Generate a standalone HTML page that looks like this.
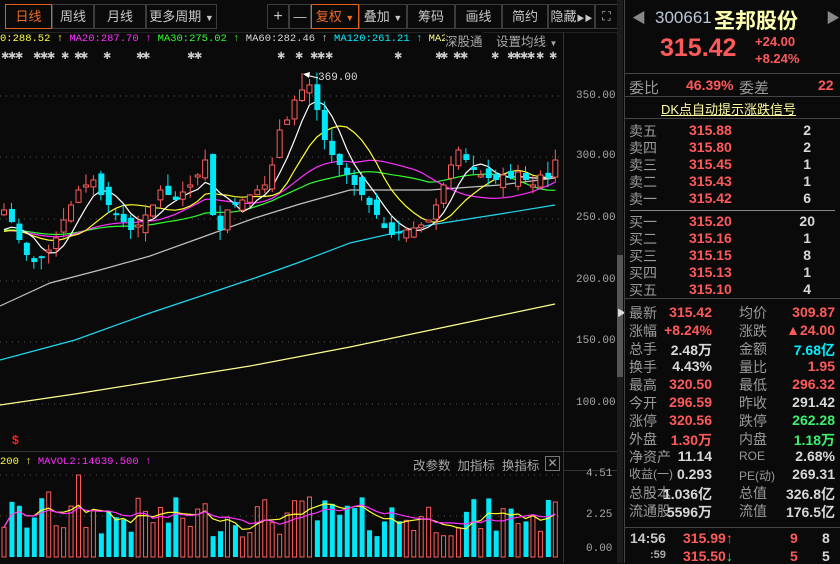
<!DOCTYPE html>
<html><head><meta charset="utf-8"><style>
*{margin:0;padding:0;box-sizing:border-box}
body{width:840px;height:563px;background:#0a0a0a;overflow:hidden;position:relative;font-family:"Liberation Sans","Noto Sans CJK SC",sans-serif;color:#b0b0b0}
.a{position:absolute;white-space:nowrap}
.btn{position:absolute;top:4px;height:25px;border:1px solid #3c3c3c;color:#c8c8c8;font-size:13px;line-height:23px;text-align:center}
.or{border-color:#e0601c;color:#f06a22}
.mono{font-family:"Liberation Mono","Noto Sans CJK SC",monospace}
.r{color:#ff5a5a}.c{color:#00f0ff}.g{color:#3cf06e}.w{color:#d8d8d8}.gy{color:#a8a8a8}
.rp{font-size:14px;font-weight:bold}
.lab{font-size:14px;color:#9a9a9a;font-weight:normal}
.hl{position:absolute;left:625px;width:215px;height:1px;background:#444}
.st{position:absolute;top:52px;font-size:10px;color:#c8c8c8;line-height:10px}
</style></head><body>
<div class="btn or" style="left:5px;width:47px">日线</div>
<div class="btn" style="left:52px;width:42px">周线</div>
<div class="btn" style="left:94px;width:52px">月线</div>
<div class="btn" style="left:146px;width:71px">更多周期 <span style="font-size:9px">▼</span></div>
<div class="btn" style="left:267px;width:22px;font-size:16px">+</div>
<div class="btn" style="left:289px;width:22px">—</div>
<div class="btn or" style="left:311px;width:48px">复权 <span style="font-size:9px">▼</span></div>
<div class="btn" style="left:359px;width:48px">叠加 <span style="font-size:9px">▼</span></div>
<div class="btn" style="left:407px;width:48px">筹码</div>
<div class="btn" style="left:455px;width:47px">画线</div>
<div class="btn" style="left:502px;width:46px">简约</div>
<div class="btn" style="left:548px;width:47px">隐藏<span style="font-size:8px">▶▶</span></div>
<div class="btn" style="left:595px;width:23px;font-size:12px">⛶</div>
<div class="a" style="left:0;top:32px;width:618px;height:1px;background:#222"></div>
<div class="a mono" style="left:0;top:32px;font-size:10.5px;line-height:14px">
<span style="color:#ffff40">0:288.52 ↑</span> <span style="color:#ff30ff">MA20:287.70 ↑</span> <span style="color:#30ff30">MA30:275.02 ↑</span> <span class="w">MA60:282.46 ↑</span> <span class="c">MA120:261.21 ↑</span> <span style="color:#ffff80">MA25</span></div>
<div class="a gy" style="left:445px;top:31px;font-size:12.5px;background:#0a0a0a">深股通</div>
<div class="a gy" style="left:496px;top:31px;font-size:12.5px">设置均线 <span style="font-size:8px">▼</span></div>
<div id="stars"></div>

<svg id="ch" class="a" style="left:0;top:0" width="618" height="563"></svg>

<div class="a mono gy" style="left:576px;top:89px;font-size:11px;line-height:14px">350.00</div>
<div class="a mono gy" style="left:576px;top:150px;font-size:11px">300.00</div>
<div class="a mono gy" style="left:576px;top:212px;font-size:11px">250.00</div>
<div class="a mono gy" style="left:576px;top:274px;font-size:11px">200.00</div>
<div class="a mono gy" style="left:576px;top:335px;font-size:11px">150.00</div>
<div class="a mono gy" style="left:576px;top:397px;font-size:11px">100.00</div>
<div class="a mono w" style="left:318px;top:72px;font-size:11px">369.00</div>
<div class="a" style="left:12px;top:433px;font-size:12px;color:#ff2020;font-weight:bold">$</div>
<div class="a mono" style="left:0;top:456px;font-size:10.5px"><span style="color:#ffff40">200 ↑</span> <span style="color:#ff30ff">MAVOL2:14639.500 ↑</span></div>
<div class="a gy" style="left:413px;top:455px;font-size:12.5px">改参数 &nbsp;加指标 &nbsp;换指标</div>
<div class="a gy" style="left:545px;top:456px;width:15px;height:15px;border:1px solid #777;font-size:12px;line-height:13px;text-align:center">✕</div>
<div class="a mono gy" style="left:586px;top:468px;font-size:11px">4.51</div>
<div class="a mono gy" style="left:586px;top:509px;font-size:11px">2.25</div>
<div class="a mono gy" style="left:586px;top:543px;font-size:11px">0.00</div>

<div class="a" style="left:617px;top:0;width:6px;height:563px;background:#1c1c1c"></div>
<div class="a" style="left:617px;top:255px;width:6px;height:122px;background:#555"></div>
<div class="a" style="left:617px;top:306px;font-size:9px;color:#ddd">▶</div>
<div class="a" style="left:624px;top:0;width:1px;height:563px;background:#444"></div>

<div class="a" style="left:632px;top:8px;font-size:14px;color:#888">◀</div>
<div class="a" style="left:826px;top:8px;font-size:14px;color:#888">▶</div>
<div class="a" style="left:655px;top:8px;font-size:17px;color:#b8c8d8">300661</div>
<div class="a" style="left:714px;top:5px;font-size:21px;color:#ffffb0;font-weight:bold">圣邦股份</div>
<div class="a r" style="left:660px;top:34px;font-size:25px;font-weight:bold">315.42</div>
<div class="a r" style="left:755px;top:34px;font-size:13px;font-weight:bold">+24.00</div>
<div class="a r" style="left:755px;top:51px;font-size:13px;font-weight:bold">+8.24%</div>
<div class="hl" style="top:73px"></div>
<div class="a lab" style="left:629px;top:77px;font-size:15px">委比</div>
<div class="a r rp" style="left:686px;top:77px">46.39%</div>
<div class="a lab" style="left:739px;top:77px;font-size:15px">委差</div>
<div class="a r rp" style="left:818px;top:77px">22</div>
<div class="hl" style="top:96px"></div>
<div class="a" style="left:661px;top:99px;font-size:13px;color:#ffffa0;text-decoration:underline">DK点自动提示涨跌信号</div>
<div class="hl" style="top:118px"></div>
<div id="ob"></div>
<div class="a" style="left:630px;top:210px;width:205px;height:1px;background:#888"></div>
<div class="hl" style="top:298px"></div>
<div id="st"></div>
<div class="hl" style="top:527px"></div>
<div class="a w rp" style="left:630px;top:530px;color:#c8c8c8">14:56</div>
<div class="a r rp" style="left:683px;top:530px">315.99↑</div>
<div class="a r rp" style="left:790px;top:530px">9</div>
<div class="a w rp" style="left:822px;top:530px">8</div>
<div class="a rp" style="left:650px;top:549px;color:#aaa;font-size:11px">:59</div>
<div class="a r rp" style="left:683px;top:548px">315.50<span class="g">↓</span></div>
<div class="a r rp" style="left:790px;top:548px">5</div>
<div class="a w rp" style="left:822px;top:548px">5</div>

<script>
var sx=[1,8,15,33,40,47,61,74,80,103,136,142,187,194,277,295,310,317,325,394,435,440,453,460,491,507,513,520,527,536,549];
var hs="";sx.forEach(function(x){hs+='<div class="st" style="left:'+x+'px">✱</div>';});
document.getElementById("stars").innerHTML=hs;
var ob=[["卖五","315.88","2"],["卖四","315.80","2"],["卖三","315.45","1"],["卖二","315.43","1"],["卖一","315.42","6"],["买一","315.20","20"],["买二","315.16","1"],["买三","315.15","8"],["买四","315.13","1"],["买五","315.10","4"]];
var h="";ob.forEach(function(r,i){var y=(i<5?121+i*17:212+(i-5)*17);
h+='<div class="a lab" style="left:629px;top:'+y+'px">'+r[0]+'</div><div class="a r rp" style="left:689px;top:'+(y+1)+'px">'+r[1]+'</div><div class="a w rp" style="right:'+(r[2].length>1?25:29)+'px;top:'+(y+1)+'px">'+r[2]+'</div>';});
document.getElementById("ob").innerHTML=h;
var st=[["最新","315.42","r","均价","309.87","r"],["涨幅","+8.24%","r","涨跌","▲24.00","r"],["总手","2.48万","w","金额","7.68亿","c"],["换手","4.43%","w","量比","1.95","r"],["最高","320.50","r","最低","296.32","r"],["今开","296.59","r","昨收","291.42","w"],["涨停","320.56","r","跌停","262.28","g"],["外盘","1.30万","r","内盘","1.18万","g"],["净资产","11.14","w","ROE","2.68%","w"],["收益(一)","0.293","w","PE(动)","269.31","w"],["总股本","1.036亿","w","总值","326.8亿","w"],["流通股","5596万","w","流值","176.5亿","w"]];
h="";st.forEach(function(r,i){var y=303+i*18;
h+='<div class="a lab" style="left:629px;top:'+y+'px;'+(i==9?'font-size:12px':'')+'">'+r[0]+'</div><div class="a rp '+r[2]+'" style="right:128px;top:'+(y+1)+'px">'+r[1]+'</div><div class="a lab" style="left:739px;top:'+y+'px;'+(i==8||i==9?'font-size:12px;top:'+(y+2)+'px':'')+'">'+r[3]+'</div><div class="a rp '+r[5]+'" style="right:5px;top:'+(y+1)+'px">'+r[4]+'</div>';});
document.getElementById("st").innerHTML=h;

var C=[210,222,240,255,262,258,250,238,220,205,190,185,180,195,205,215,222,230,225,215,205,190,195,200,192,185,175,160,215,230,210,205,200,195,190,185,165,130,120,100,90,85,110,140,155,165,175,185,195,205,215,228,235,232,230,228,225,220,205,185,165,150,160,170,175,178,180,175,178,172,180,185,175,178,160];
var sd=7;function rnd(){sd=(sd*9301+49297)%233280;return sd/233280;}
var svg="";
function L(pts,col){return '<polyline fill="none" stroke="'+col+'" stroke-width="1.2" points="'+pts.map(function(p){return p[0].toFixed(1)+","+p[1].toFixed(1)}).join(" ")+'"/>';}
[96,157,219,281,342,404].forEach(function(y){svg+='<line x1="0" x2="563" y1="'+y+'" y2="'+y+'" stroke="#555" stroke-dasharray="1,5"/>';});
[475,516].forEach(function(y){svg+='<line x1="0" x2="563" y1="'+y+'" y2="'+y+'" stroke="#555" stroke-dasharray="1,5"/>';});
svg+='<line x1="563.5" x2="563.5" y1="32" y2="563" stroke="#333"/>';
svg+='<line x1="0" x2="618" y1="451.5" y2="451.5" stroke="#333"/>';
svg+='<line x1="563" x2="618" y1="470.5" y2="470.5" stroke="#333"/>';
svg+=L([[0,405],[75,394],[150,382],[250,366],[350,347],[450,326],[555,304]],"#ffff90");
svg+=L([[0,360],[75,340],[150,313],[255,278],[300,262],[350,243],[430,225],[500,214],[555,205]],"#20d8f0");
svg+=L([[0,306],[50,283],[100,270],[150,256],[200,238],[255,218],[300,204],[350,190],[430,190],[500,185],[555,178]],"#c0c0c0");
var hist=[];for(var i=0;i<30;i++)hist.push(235-i*0.3);hist.reverse();var all=hist.concat(C);
function ma(n){var p=[];for(var i=0;i<C.length;i++){var k=i+30,t=0;for(var j=0;j<n;j++)t+=all[k-j];p.push([4+i*7.45,t/n]);}return p;}
svg+=L(ma(30),"#30ff30");svg+=L(ma(20),"#ff30ff");svg+=L(ma(10),"#ffff30");svg+=L(ma(5),"#ffffff");
var vol="",vy=[];
for(var i=0;i<C.length;i++){var x=4+i*7.45,c=C[i],o=(i?C[i-1]:215)+(rnd()-0.5)*18;
 var up=c<o;var tp=Math.min(o,c),bt=Math.max(o,c);if(bt-tp<2)bt=tp+2;
 var hi=tp-rnd()*12,lo=bt+rnd()*12;if(i==40)hi=73;
 var col=up?"#ff5c5c":"#00e8f8";
 svg+='<line x1="'+x+'" x2="'+x+'" y1="'+hi+'" y2="'+lo+'" stroke="'+col+'"/>';
 svg+=up?'<rect x="'+(x-2.5)+'" y="'+tp+'" width="5" height="'+(bt-tp)+'" fill="#0a0a0a" stroke="'+col+'"/>':'<rect x="'+(x-2.5)+'" y="'+tp+'" width="6" height="'+(bt-tp)+'" fill="'+col+'"/>';
 var vh=20+rnd()*40;if(i==10)vh=82;if(i==6)vh=65;if(i==41)vh=60;if(i==74)vh=55;
 vol+=up?'<rect x="'+(x-2)+'" y="'+(557-vh)+'" width="4" height="'+vh+'" fill="none" stroke="#ff5c5c"/>':'<rect x="'+(x-2)+'" y="'+(557-vh)+'" width="5" height="'+vh+'" fill="#00e8f8"/>';
 vy.push(557-vh);}
svg+=vol;
function vm(n){var p=[];for(var i=0;i<vy.length;i++){var t=0,m=0;for(var j=0;j<n&&i-j>=0;j++){t+=vy[i-j];m++;}p.push([4+i*7.45,t/m]);}return p;}
svg+=L(vm(5),"#ffff30");svg+=L(vm(10),"#ff30ff");
svg+='<line x1="306" y1="75" x2="318" y2="78" stroke="#fff"/><polygon points="303,74 310,72 309,78" fill="#fff"/>';
document.getElementById("ch").innerHTML=svg;
</script>
</body></html>
